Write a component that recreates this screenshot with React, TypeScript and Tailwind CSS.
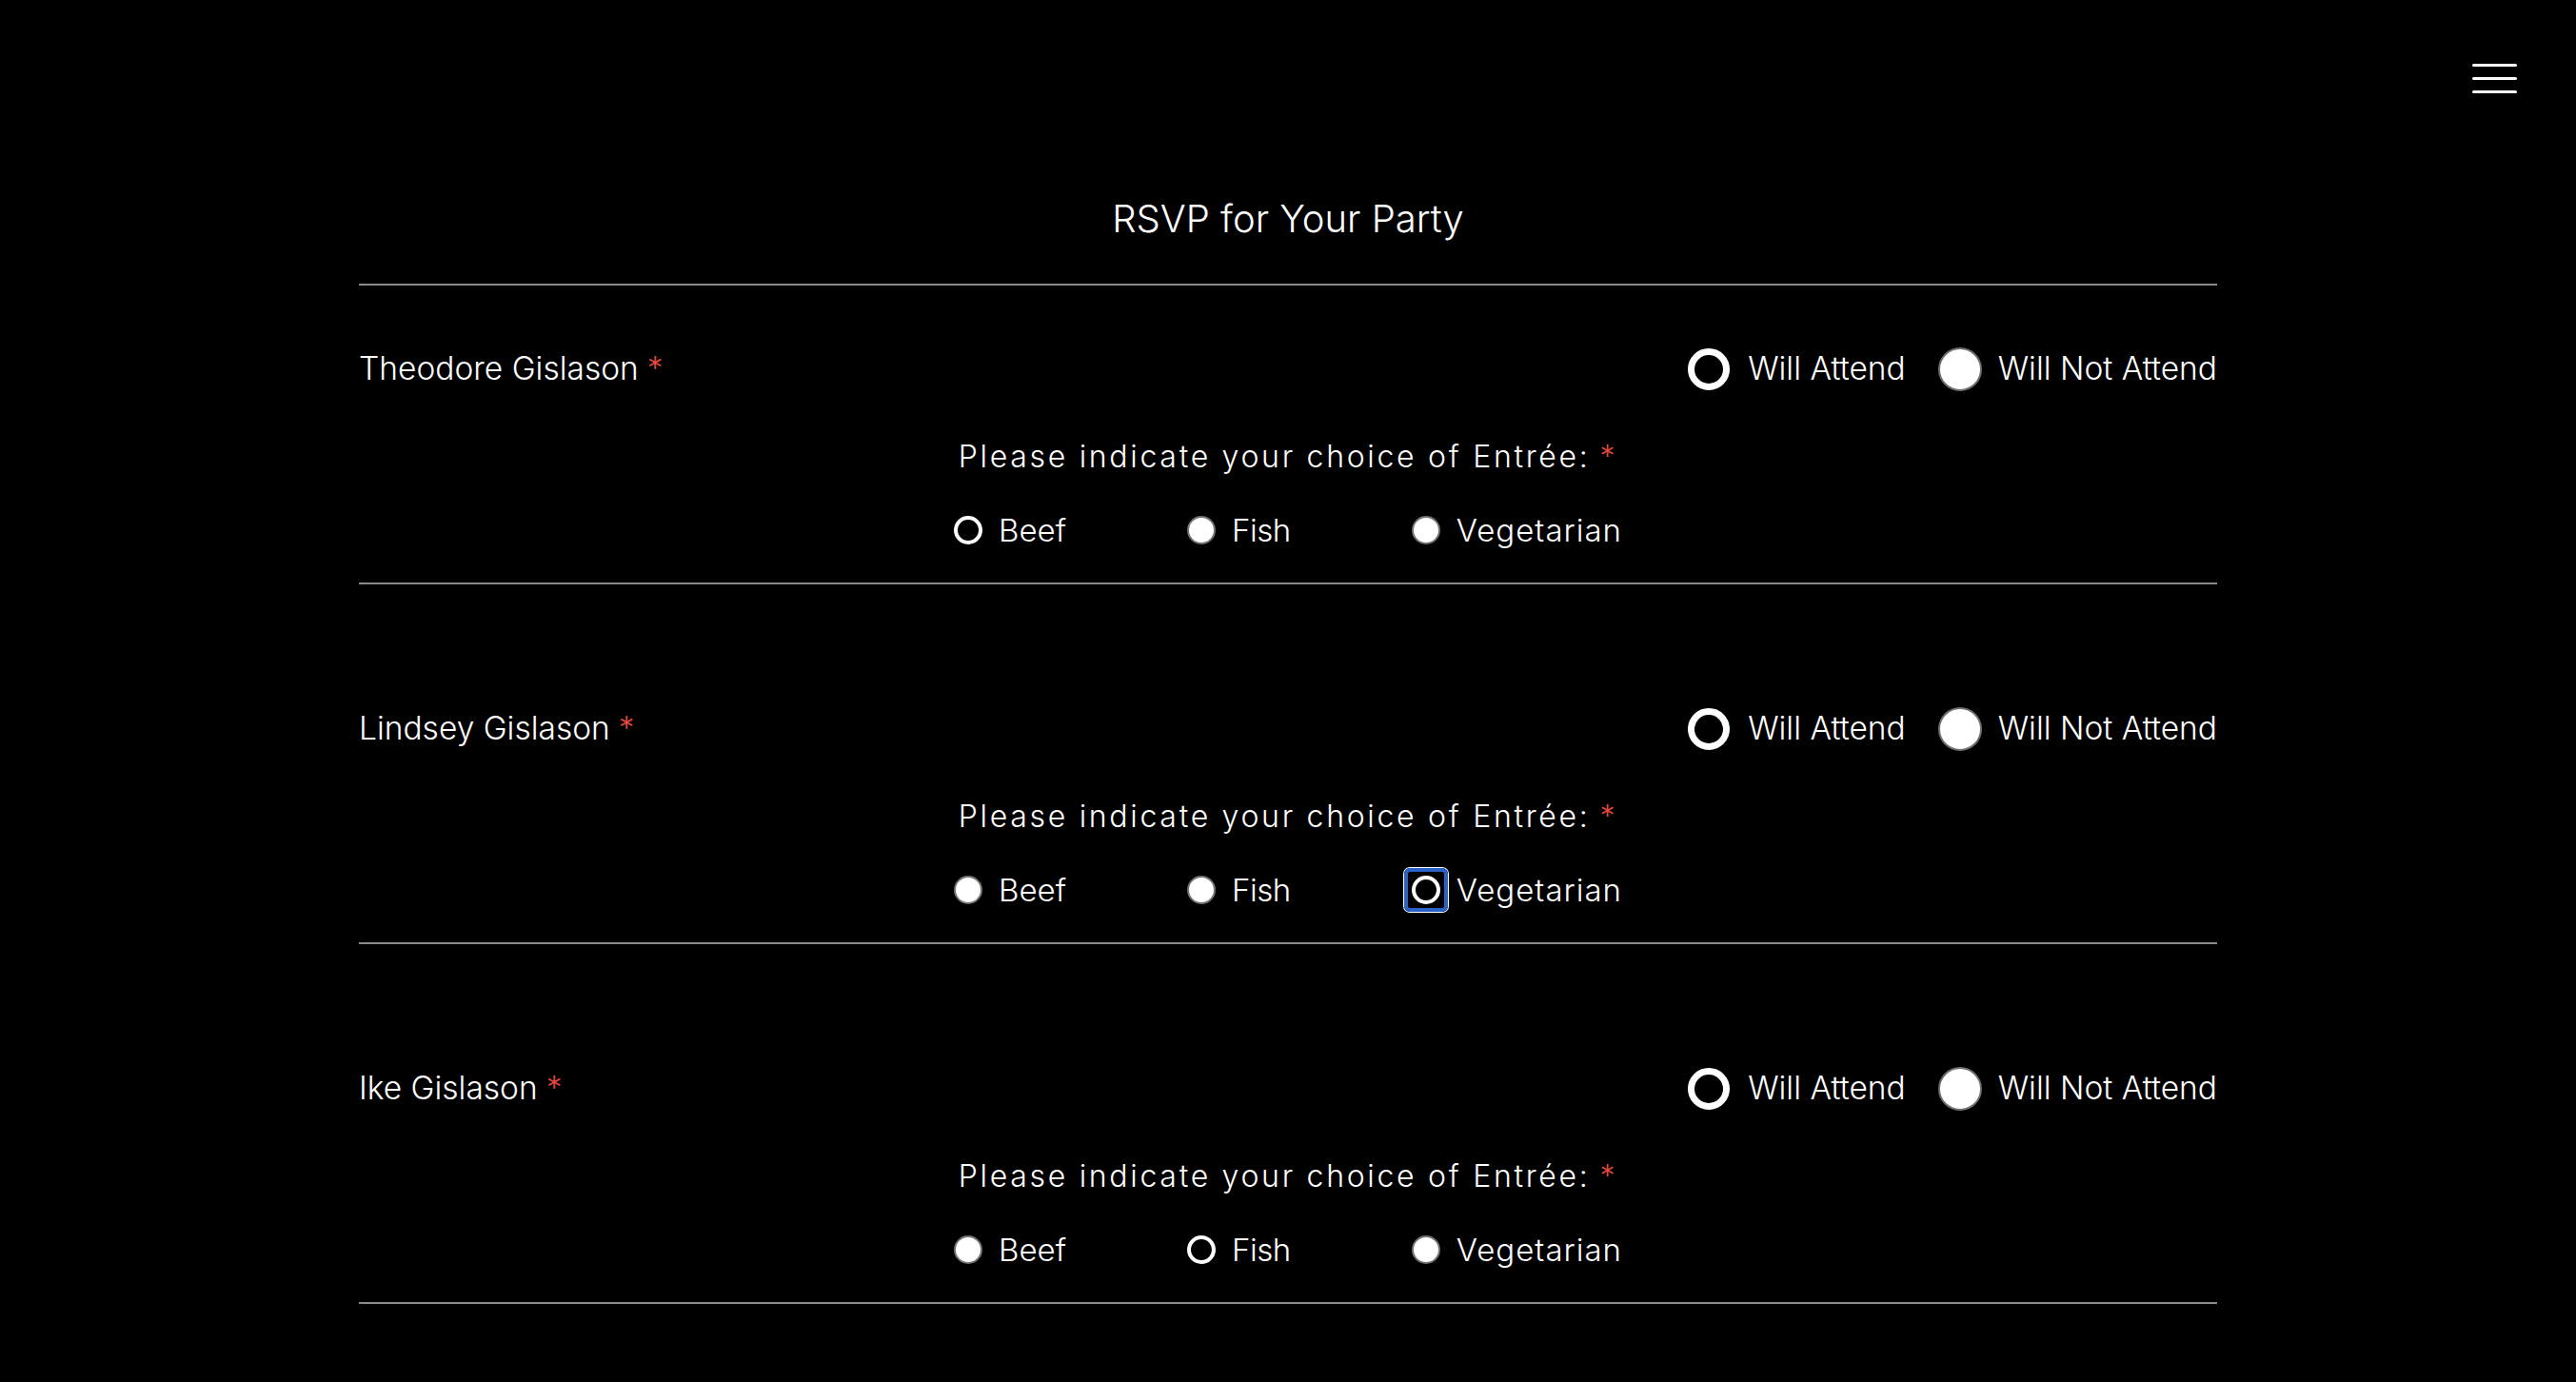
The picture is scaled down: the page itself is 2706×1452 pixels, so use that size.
import React from "react";

type Person = { name: string; entree: string; focus?: boolean };

const people: Person[] = [
  { name: "Theodore Gislason", entree: "Beef" },
  { name: "Lindsey Gislason", entree: "Vegetarian", focus: true },
  { name: "Ike Gislason", entree: "Fish" },
];

const entrees = ["Beef", "Fish", "Vegetarian"];

function Asterisk({ className }: { className: string }) {
  return <span className={className}>*</span>;
}

function Row({ p, i }: { p: Person; i: number }) {
  return (
    <section
      className={
        i === 0
          ? "border-b-2 border-[#8a8a8a] pt-[66px] pb-[39px]"
          : "border-b-2 border-[#8a8a8a] pt-[130px] pb-[39px]"
      }
    >
      <div className="flex h-[44px] items-center justify-between">
        <div className="text-[33.5px] leading-none">
          {p.name}
          <Asterisk className="ml-[9px] text-[#e4493d]" />
        </div>
        <div className="flex items-center gap-[34px]">
          <label className="flex items-center gap-[19px] text-[33.5px] leading-none">
            <input
              type="radio"
              name={`attend-${i}`}
              defaultChecked
              className="m-0 h-[44px] w-[44px] appearance-none rounded-full border-2 border-[#6f6f6f] bg-white checked:border-[7px] checked:border-white checked:bg-black"
            />
            <span>Will Attend</span>
          </label>
          <label className="flex items-center gap-[17px] text-[33.5px] leading-none">
            <input
              type="radio"
              name={`attend-${i}`}
              className="m-0 h-[46px] w-[46px] appearance-none rounded-full border-2 border-[#6f6f6f] bg-white checked:border-[7px] checked:border-white checked:bg-black"
            />
            <span>Will Not Attend</span>
          </label>
        </div>
      </div>
      <p className="mt-[50px] flex h-[40px] items-center justify-center text-[32px] leading-none tracking-[2.7px]">
        Please indicate your choice of Entrée:
        <Asterisk className="ml-[10px] text-[#e4493d]" />
      </p>
      <div className="mt-[41px] flex h-[32px] items-center justify-center gap-[127px]">
        {entrees.map((e) => (
          <label key={e} className="flex items-center gap-[17px] text-[33px] leading-none">
            <span className="relative flex">
              <input
                type="radio"
                name={`entree-${i}`}
                defaultChecked={p.entree === e}
                className="m-0 h-[30px] w-[30px] appearance-none rounded-full border-2 border-[#737373] bg-white checked:border-4 checked:border-white checked:bg-black"
              />
              {p.focus && p.entree === e ? (
                <span className="pointer-events-none absolute -inset-[8px] rounded-[6px] border-4 border-[#2a63c8] shadow-[0_0_0_1px_#ffffff]" />
              ) : null}
            </span>
            <span className={e === "Vegetarian" ? "tracking-[1px]" : e === "Fish" ? "tracking-[-0.5px]" : ""}>{e}</span>
          </label>
        ))}
      </div>
    </section>
  );
}

export default function App() {
  return (
    <div className="min-h-screen bg-black font-['Inter',sans-serif] font-[350] text-white">
      <header className="flex justify-end pt-[67px] pr-[62px]">
        <button className="flex w-[47px] flex-col gap-[11px]" aria-label="Menu">
          <span className="block h-[3px] w-full rounded-full bg-white" />
          <span className="block h-[3px] w-full rounded-full bg-white" />
          <span className="block h-[3px] w-full rounded-full bg-white" />
        </button>
      </header>
      <main className="mx-auto w-[1952px]">
        <h1 className="mt-[112px] text-center text-[40px] leading-[40px]">RSVP for Your Party</h1>
        <div className="mt-[48px] border-t-2 border-[#8a8a8a]">
          {people.map((p, i) => (
            <Row key={p.name} p={p} i={i} />
          ))}
        </div>
      </main>
    </div>
  );
}
